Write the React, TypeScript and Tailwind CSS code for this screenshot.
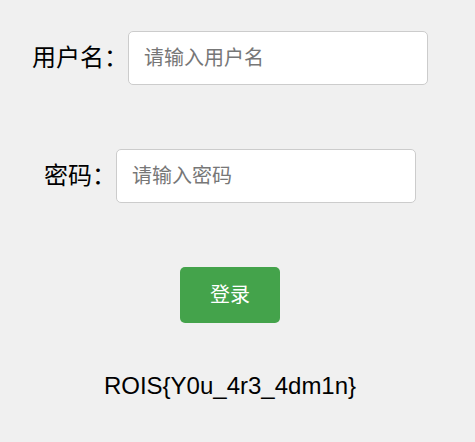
export default function App() {
  return (
    <div
      className="min-h-screen w-full bg-[#f0f0f0] text-black pr-[15px] pt-[31px] flex flex-col items-center"
      style={{ fontFamily: '"Liberation Sans", Arial, "Noto Sans CJK SC", sans-serif' }}
    >
      {/* username */}
      <div className="flex items-center">
        <label className="text-[24px] leading-none">用户名：</label>
        <input
          type="text"
          placeholder="请输入用户名"
          className="w-[300px] h-[54px] bg-white border border-[#cccccc] rounded-[5px] pl-[15px] text-[20px] placeholder:text-[#777777] outline-none"
        />
      </div>

      {/* password */}
      <div className="flex items-center mt-[64px]">
        <label className="text-[24px] leading-none">密码：</label>
        <input
          type="password"
          placeholder="请输入密码"
          className="w-[300px] h-[54px] bg-white border border-[#cccccc] rounded-[5px] pl-[15px] text-[20px] placeholder:text-[#777777] outline-none"
        />
      </div>

      <button className="mt-[64px] w-[100px] h-[56px] bg-[#44a34b] text-white text-[20px] rounded-[5px]">
        登录
      </button>

      <p className="mt-[45px] text-[24px]">ROIS&#123;Y0u_4r3_4dm1n&#125;</p>
    </div>
  );
}
